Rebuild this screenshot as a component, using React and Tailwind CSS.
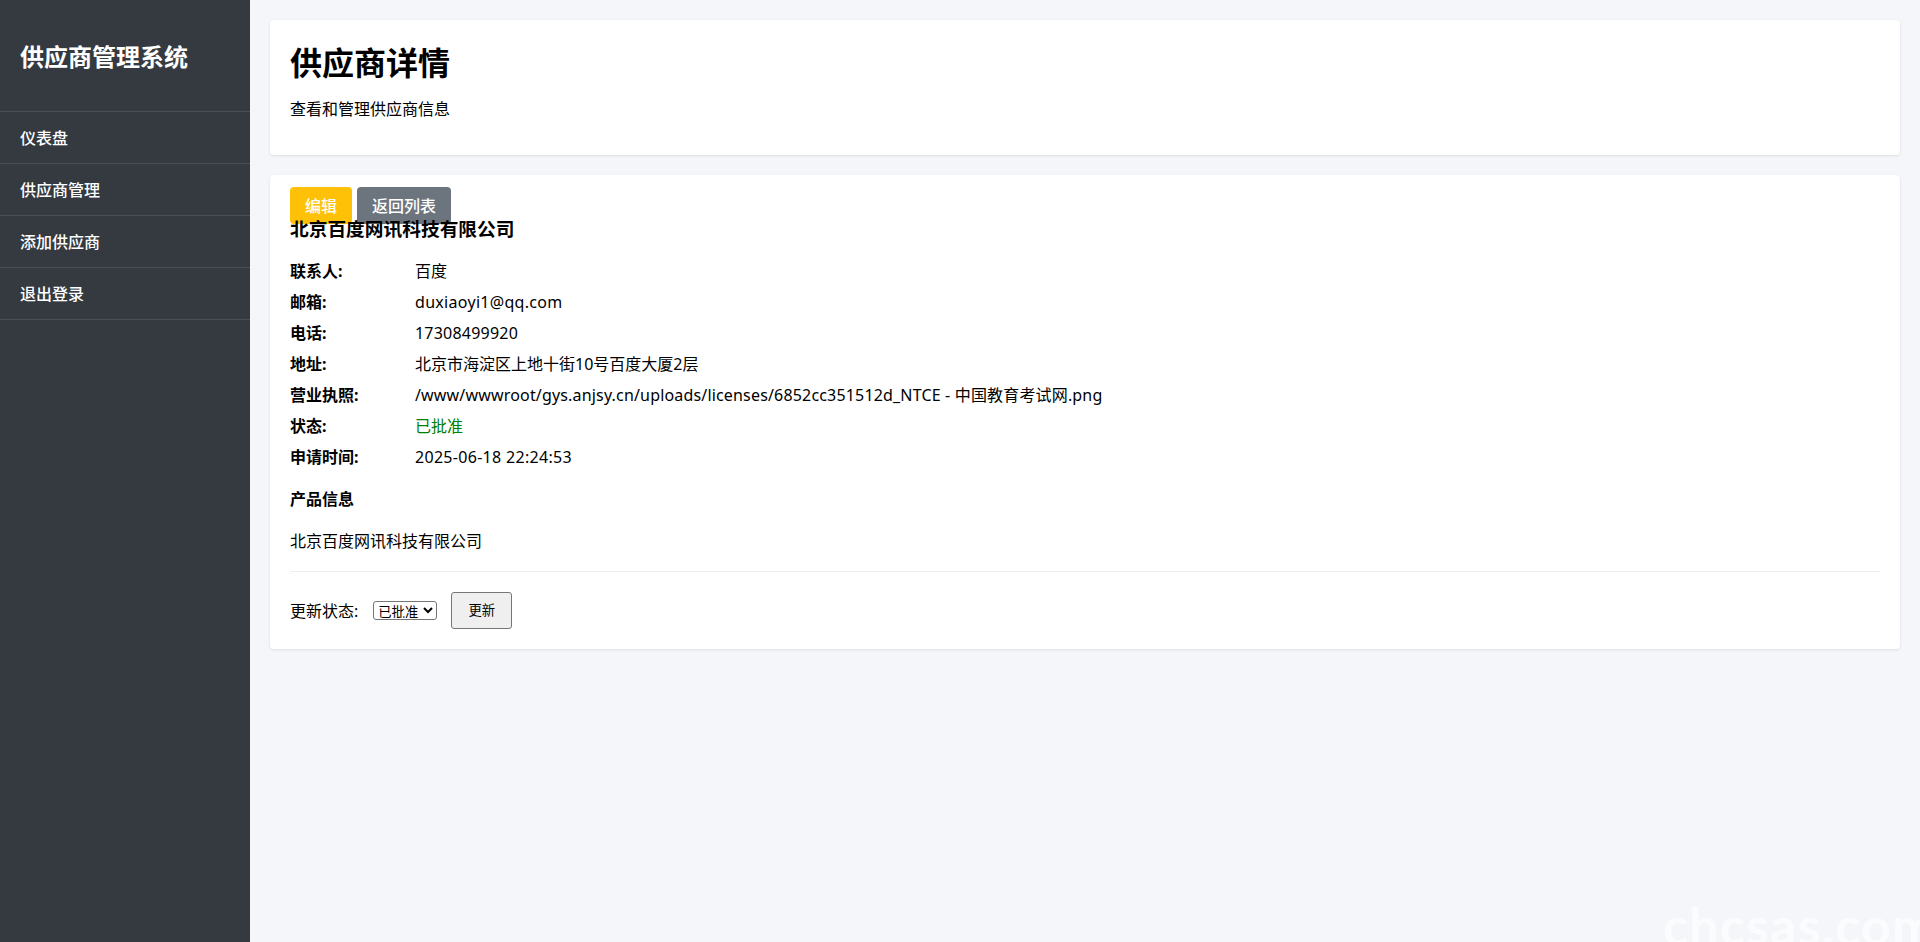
const rows = [
  ["联系人:", "百度"],
  ["邮箱:", "duxiaoyi1@qq.com", "tracking-[0.3px]"],
  ["电话:", "17308499920", "tracking-[0.22px]"],
  ["地址:", "北京市海淀区上地十街10号百度大厦2层"],
  ["营业执照:", "/www/wwwroot/gys.anjsy.cn/uploads/licenses/6852cc351512d_NTCE - 中国教育考试网.png", "tracking-[0.17px]"],
  ["状态:", "已批准", "text-[#008000]"],
  ["申请时间:", "2025-06-18 22:24:53", "tracking-[0.3px]"],
];

const nav = ["仪表盘", "供应商管理", "添加供应商", "退出登录"];

export default function App() {
  return (
    <div className="relative flex h-[942px] w-full overflow-hidden bg-[#f4f6f9] text-base text-black font-['Noto_Sans','Noto_Sans_CJK_SC',sans-serif]">
      <aside className="w-[250px] shrink-0 bg-[#343a40] text-white">
        <div className="h-[111px] pl-5 pt-[41px] text-2xl leading-8 font-bold">供应商管理系统</div>
        <nav className="border-t border-[#495057]">
          {nav.map((item) => (
            <a key={item} className="flex h-[52px] items-center border-b border-[#495057] pl-5 text-base font-medium text-white">
              {item}
            </a>
          ))}
        </nav>
      </aside>
      <main className="flex min-w-0 flex-1 flex-col gap-5 p-5">
        <section className="h-[135px] rounded bg-white p-5 shadow-[0_1px_3px_rgba(0,0,0,0.1)]">
          <h1 className="h-[45px] text-[32px] leading-[45px] font-bold">供应商详情</h1>
          <p className="mt-[13px] text-base leading-[22px]">查看和管理供应商信息</p>
        </section>
        <section className="rounded bg-white px-5 pt-3 pb-5 shadow-[0_1px_3px_rgba(0,0,0,0.1)]">
          <div className="flex gap-[5px]">
            <a className="flex h-[37px] items-center rounded bg-[#ffc107] px-[15px] text-base font-medium text-white">编辑</a>
            <a className="flex h-[37px] items-center rounded bg-[#6c757d] px-[15px] text-base font-medium text-white">返回列表</a>
          </div>
          <h2 className="relative -mt-2 h-[26px] text-[18.72px] leading-[26px] font-bold">北京百度网讯科技有限公司</h2>
          <div className="mt-[13px]">
            {rows.map(([label, value, cls]) => (
              <div key={label} className="flex h-[31px] items-center text-base">
                <strong className="w-[125px] shrink-0 font-bold">{label}</strong>
                <span className={cls}>{value}</span>
              </div>
            ))}
          </div>
          <h3 className="mt-4 text-base leading-[22px] font-bold">产品信息</h3>
          <p className="mt-5 text-base leading-[22px]">北京百度网讯科技有限公司</p>
          <hr className="mt-[19px] border-[#eeeeee]" />
          <div className="mt-5 flex items-center">
            <span className="mr-[15px] text-base">更新状态:</span>
            <select defaultValue="已批准" className="h-[19px] w-16 rounded-[3px] border border-[#767676] pb-px text-[13.33px] leading-[15px]">
              <option>已批准</option>
              <option>待审核</option>
              <option>已拒绝</option>
            </select>
            <button className="ml-[14px] h-[37px] w-[61px] rounded-[3px] border border-[#767676] bg-[#efefef] text-[13.33px]">更新</button>
          </div>
        </section>
      </main>
      <div className="pointer-events-none absolute top-[896px] left-[1663px] text-[52px] leading-[58px] font-bold tracking-[1.2px] whitespace-nowrap text-[#fbfcfe] font-['Lato',sans-serif]">
        chcsas.com
      </div>
    </div>
  );
}
